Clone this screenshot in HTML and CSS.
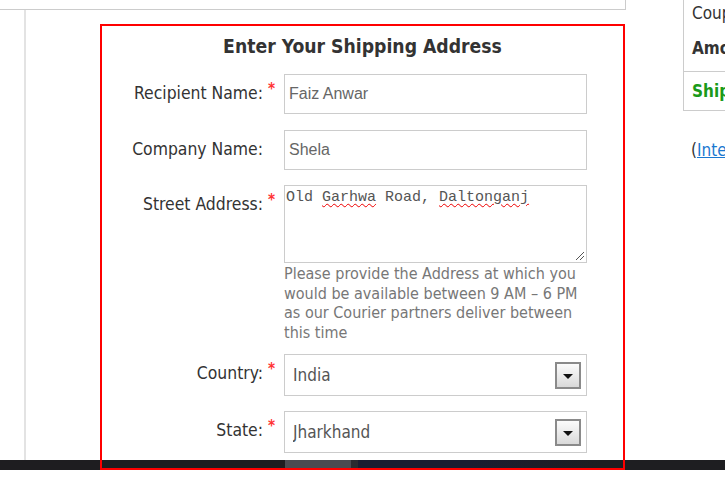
FILE: index.html
```html
<!DOCTYPE html>
<html lang="en">
<head>
<meta charset="utf-8">
<title>Shipping Address</title>
<link rel="stylesheet" href="styles.css">
</head>
<body>
<div class="page">
  <div class="main">
    <div class="topstrip"></div>
    <div class="panel">
      <section class="ship">
        <h2 class="ship-title">Enter Your Shipping Address</h2>

        <div class="row">
          <label class="lbl" for="rn">Recipient Name:</label>
          <span class="req">*</span>
          <div class="field"><input id="rn" class="txt" type="text" value="Faiz Anwar"></div>
        </div>

        <div class="row row-co">
          <label class="lbl" for="cn">Company Name:</label>
          <span class="req"></span>
          <div class="field"><input id="cn" class="txt" type="text" value="Shela"></div>
        </div>

        <div class="row row-addr">
          <label class="lbl">Street Address:</label>
          <span class="req">*</span>
          <div class="field">
            <div class="area" role="textbox" aria-multiline="true">Old <span class="sp">Garhwa</span> Road, <span class="sp">Daltonganj</span><svg class="grip" width="12" height="12" viewBox="0 0 12 12"><path d="M11 3 L3 11 M11 7 L7 11" stroke="#555" stroke-width="1" fill="none"/></svg></div>
            <p class="help">Please provide the Address at which you<br>would be available between 9 AM – 6 PM<br>as our Courier partners deliver between<br>this time</p>
          </div>
        </div>

        <div class="row row-country">
          <label class="lbl" for="co">Country:</label>
          <span class="req">*</span>
          <div class="field sel-wrap">
            <select id="co" class="sel"><option>India</option></select>
            <span class="sel-btn"><span class="tri"></span></span>
          </div>
        </div>

        <div class="row row-last">
          <label class="lbl" for="st">State:</label>
          <span class="req">*</span>
          <div class="field sel-wrap">
            <select id="st" class="sel"><option>Jharkhand</option></select>
            <span class="sel-btn"><span class="tri"></span></span>
          </div>
        </div>
      </section>
    </div>
  </div>

  <aside class="side">
    <div class="sum">
      <div class="sum-row sum-first">Coupon Discount</div>
      <div class="sum-row sum-bold">Amount Payable</div>
      <div class="sum-row sum-ship">Shipping Free</div>
    </div>
    <p class="intl">(<a href="#">International Shipping</a>)</p>
  </aside>
</div>
<div class="footbar"></div>
</body>
</html>
```

FILE: styles.css
```css
html, body {
  margin: 0;
  padding: 0;
  background: #fff;
  overflow: hidden;
}
body {
  font-family: "DejaVu Sans", "Noto Sans", sans-serif;
  font-stretch: condensed;
  color: #333;
}
.page {
  display: flex;
  height: 460px;
}
.main {
  width: 626px;
  flex: none;
  display: flex;
  flex-direction: column;
}
.topstrip {
  height: 9px;
  border-right: 1px solid #ccc;
  border-bottom: 1px solid #ccc;
}
.panel {
  flex: 1;
  margin-left: 24px;
  border-left: 2px solid #e3e3e3;
  padding: 14px 0 0 74px;
}
.ship {
  position: relative;
  width: 525px;
  height: 425px;
  padding-top: 11px;
}
.ship::after {
  content: "";
  position: absolute;
  left: 0;
  top: 0;
  right: 0;
  bottom: -10px;
  border: 2px solid #f00;
  z-index: 2;
  pointer-events: none;
}
.ship-title {
  margin: 0 0 15px;
  font-size: 19.2px;
  line-height: 24px;
  font-weight: bold;
  text-align: center;
  color: #333;
}
.row {
  display: flex;
  margin-bottom: 16px;
}
.row-co { margin-bottom: 15px; }
.row-addr { margin-bottom: 12px; }
.row-country { margin-bottom: 15px; }
.row-last { margin-bottom: 0; }
.lbl {
  width: 163px;
  flex: none;
  text-align: right;
  font-size: 17.4px;
  line-height: 20px;
  padding-top: 9px;
  color: #333;
}
.req {
  width: 21px;
  flex: none;
  color: #f33;
  font-size: 15px;
  font-weight: bold;
  line-height: 18px;
  padding-top: 6px;
  padding-left: 5px;
  box-sizing: border-box;
}
.field {
  width: 303px;
  flex: none;
}
.txt {
  display: block;
  box-sizing: border-box;
  width: 303px;
  height: 40px;
  margin: 0;
  border: 1px solid #ccc;
  padding: 0 4px;
  font-family: "Liberation Sans", Arial, sans-serif;
  font-size: 16px;
  color: #666;
  background: #fff;
  outline: none;
}
.area {
  position: relative;
  box-sizing: border-box;
  width: 303px;
  height: 78px;
  border: 1px solid #ccc;
  padding: 3px 1px;
  font-family: "Liberation Mono", "DejaVu Sans Mono", monospace;
  font-stretch: normal;
  font-size: 15px;
  line-height: 17px;
  color: #555;
}
.sp {
  text-decoration: underline wavy #e00;
  text-decoration-thickness: 1px;
  text-underline-offset: 2px;
}
.grip {
  position: absolute;
  right: 1px;
  bottom: 1px;
}
.help {
  margin: 1px 0 0;
  font-size: 16px;
  line-height: 19.5px;
  color: #777;
}
.sel-wrap {
  position: relative;
}
.sel {
  display: block;
  box-sizing: border-box;
  width: 303px;
  height: 42px;
  margin: 0;
  border: 1px solid #ccc;
  padding: 0 0 0 8px;
  font-family: "DejaVu Sans", sans-serif;
  font-stretch: condensed;
  font-size: 17px;
  color: #555;
  background: #fff;
  appearance: none;
  -webkit-appearance: none;
  border-radius: 0;
  outline: none;
}
.sel-btn {
  position: absolute;
  right: 6px;
  top: 8px;
  width: 26px;
  height: 27px;
  box-sizing: border-box;
  border: 2px solid #8a8a8a;
  background: linear-gradient(#fbfbfb, #e9e9e9 55%, #d9d9d9);
  display: flex;
  align-items: center;
  justify-content: center;
  pointer-events: none;
}
.tri {
  width: 0;
  height: 0;
  border-left: 5px solid transparent;
  border-right: 5px solid transparent;
  border-top: 5px solid #111;
  margin-top: 1px;
}
.side {
  margin-left: 57px;
  flex: 1;
  min-width: 0;
}
.sum {
  border-left: 1px solid #ccc;
  border-bottom: 1px solid #ccc;
  width: 200px;
}
.sum-row {
  padding: 0 8px;
  font-size: 17px;
  white-space: nowrap;
  color: #333;
  box-sizing: border-box;
}
.sum-first {
  height: 34px;
  line-height: 26px;
}
.sum-bold {
  font-weight: bold;
  height: 38px;
  line-height: 29px;
  border-bottom: 1px solid #ccc;
}
.sum-ship {
  font-weight: bold;
  color: #1a9a1a;
  height: 38px;
  line-height: 39px;
}
.intl {
  margin: 29px 0 0;
  padding-left: 8px;
  font-size: 17px;
  white-space: nowrap;
  color: #333;
}
.intl a {
  color: #1a78d0;
  text-decoration: underline;
}
.footbar {
  height: 10px;
  background: linear-gradient(to right, #1e1d20 0, #1e1d20 285px, #4b4b51 285px, #4b4b51 351px, #2b2b30 351px, #2b2b30 358px, #1c1d31 358px, #1c1d31 470px, #1e1e21 600px, #1e1e21 100%);
}
```
